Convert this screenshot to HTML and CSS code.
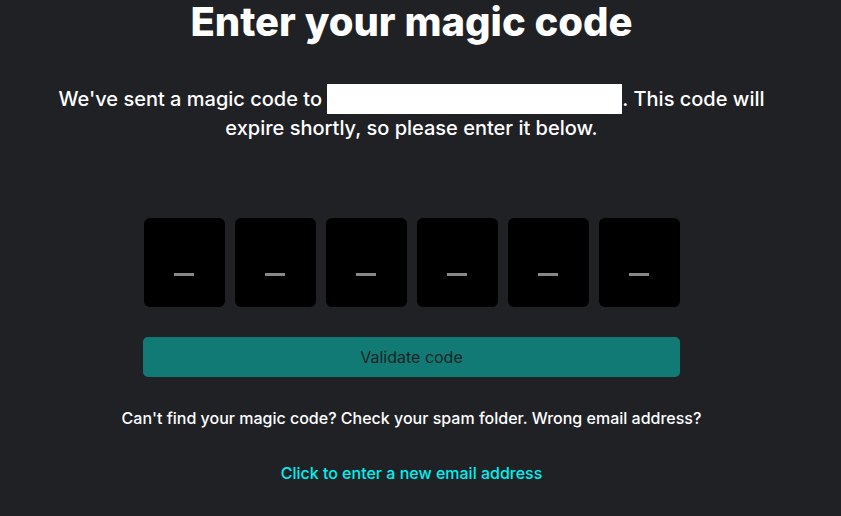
FILE: index.html
```html
<html>
<head>
<meta charset="utf-8">
<title>Enter your magic code</title>
<link rel="stylesheet" href="styles.css">
</head>
<body>

<div class="page">
	<h1 class="title">Enter your magic code</h1>

	<p class="intro">We've sent a magic code to <span class="email"></span>. This code will expire shortly, so please enter it below.</p>

	<div class="code_row">
		<div class="digit"><span></span></div>
		<div class="digit"><span></span></div>
		<div class="digit"><span></span></div>
		<div class="digit"><span></span></div>
		<div class="digit"><span></span></div>
		<div class="digit"><span></span></div>
	</div>

	<button class="btn_validate">Validate code</button>

	<p class="help">Can't find your magic code? Check your spam folder. Wrong email address?</p>

	<a class="link_new" href="#">Click to enter a new email address</a>
</div>

</body>
</html>
```

FILE: styles.css
```css
	body{
		margin: 0px;
		padding: 0px;
		background-color: #202125;
		font-family: Inter, "Liberation Sans", sans-serif;
		color: #ffffff;
	}

	.page{
		width: 823px;
		display: flex;
		flex-direction: column;
		align-items: center;
		text-align: center;
	}

	.title{
		margin: 0px;
		font-size: 40px;
		line-height: 44px;
		font-weight: 800;
	}

	.intro{
		width: 730px;
		margin: 40px 0px 0px 0px;
		font-size: 20px;
		line-height: 28px;
		font-weight: 500;
	}

	/* blank white box over the address */
	.email{
		display: inline-block;
		width: 295px;
		height: 30px;
		background-color: #ffffff;
		vertical-align: -8px;
	}

	.code_row{
		display: flex;
		gap: 10px;
		margin-top: 76px;
	}

	.digit{
		width: 81px;
		height: 89px;
		background-color: #000000;
		border-radius: 6px;
		display: flex;
		align-items: center;
		justify-content: center;
	}

	.digit span{
		display: block;
		width: 20px;
		height: 3px;
		background-color: #888888;
		margin-top: 24px;
	}

	.btn_validate{
		width: 537px;
		height: 40px;
		margin-top: 30px;
		border: 0px;
		border-radius: 5px;
		background-color: #127a74;
		color: #192424;
		font-family: Inter, "Liberation Sans", sans-serif;
		font-size: 16px;
	}

	.help{
		margin: 31px 0px 0px 0px;
		font-size: 16px;
		line-height: 20px;
		font-weight: 500;
	}

	.link_new{
		margin-top: 35px;
		font-size: 16px;
		line-height: 20px;
		font-weight: 500;
		color: #00f0f0;
		text-decoration: none;
	}
```
